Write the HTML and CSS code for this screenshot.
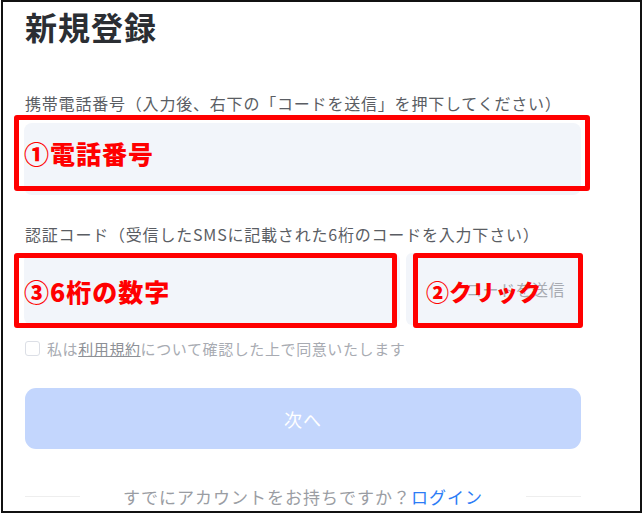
FILE: index.html
```html
<!DOCTYPE html>
<html lang="ja">
<head>
<meta charset="utf-8">
<link rel="stylesheet" href="styles.css">
</head>
<body>
<div class="frame">
  <div class="form">
    <h1 class="title">新規登録</h1>
    <div class="label label-first">携帯電話番号（入力後、右下の「コードを送信」を押下してください）</div>
    <div class="field">
      <div class="input input-full"></div>
      <div class="mark mark-phone"><span class="mark-text">①電話番号</span></div>
    </div>
    <div class="label label-second">認証コード（受信したSMSに記載された6桁のコードを入力下さい）</div>
    <div class="code-row">
      <div class="field field-code">
        <div class="input input-code"></div>
        <div class="mark mark-code"><span class="mark-text">③6桁の数字</span></div>
      </div>
      <div class="field field-send">
        <div class="send-btn">コードを送信</div>
        <div class="mark mark-send"><span class="mark-text mark-text-small">②クリック</span></div>
      </div>
    </div>
    <div class="agree">
      <span class="checkbox"></span>
      <span class="agree-text">私は<span class="terms">利用規約</span>について確認した上で同意いたします</span>
    </div>
    <div class="next-btn">次へ</div>
    <div class="footer">
      <span class="rule"></span>
      <span class="footer-text">すでにアカウントをお持ちですか？<span class="login">ログイン</span></span>
      <span class="rule"></span>
    </div>
  </div>
</div>
</body>
</html>
```
FILE: styles.css
```css
* { box-sizing: border-box; }
html, body {
  margin: 0;
  padding: 0;
  background: #ffffff;
}
body {
  font-family: "Noto Sans CJK JP", "Noto Sans", sans-serif;
  width: 644px;
  height: 513px;
  overflow: hidden;
}
.frame {
  margin-left: 1px;
  width: 641px;
  height: 513px;
  border: 2px solid #111111;
  background: #ffffff;
  padding-left: 22px;
}
.form {
  width: 556px;
  display: flex;
  flex-direction: column;
}
.title {
  margin: 4px 0 0 0;
  font-size: 32px;
  line-height: 40px;
  font-weight: 700;
  color: #2b2e33;
  letter-spacing: 1px;
}
.label {
  font-size: 16px;
  line-height: 22px;
  color: #5a5d63;
  letter-spacing: 0.8px;
  white-space: nowrap;
}
.label-first { margin-top: 46px; }
.label-second { margin-top: 28px; }
.field { position: relative; }
.input {
  background: #f2f5fa;
  border-radius: 8px;
  height: 72px;
}
.input-full { margin-top: 9px; margin-left: -1px; width: 557px; }
.code-row {
  margin-top: 8px;
  display: flex;
  gap: 5px;
  width: 556px;
}
.field-code { width: 376px; }
.input-code { width: 376px; margin-left: -1px; }
.field-send { width: 175px; }
.send-btn {
  height: 72px;
  background: #f2f5fa;
  border-radius: 6px;
  display: flex;
  align-items: center;
  justify-content: center;
  padding-left: 44px;
  font-size: 16px;
  color: #a8abb2;
  letter-spacing: 0.5px;
}
.mark {
  position: absolute;
  border: 5px solid #ff0000;
  border-radius: 3px;
  display: flex;
  align-items: center;
}
.mark-phone {
  left: -11px;
  top: 1px;
  width: 576px;
  height: 76px;
  padding-left: 5px;
}
.mark-code {
  left: -11px;
  top: 0;
  width: 383px;
  height: 75px;
  padding-left: 5px;
}
.mark-send {
  left: 7px;
  top: 0;
  width: 170px;
  height: 75px;
  padding-left: 8px;
}
.mark-text {
  color: #ff0000;
  font-size: 25px;
  font-weight: 900;
  letter-spacing: 1px;
  white-space: nowrap;
  line-height: 30px;
}
.mark-text-small { font-size: 23px; letter-spacing: 0; }
.agree {
  margin-top: 13px;
  display: flex;
  align-items: center;
  gap: 7px;
  height: 20px;
}
.checkbox {
  width: 15px;
  height: 15px;
  border: 1px solid #dcdfe6;
  border-radius: 3px;
  background: #ffffff;
  flex: none;
}
.agree-text {
  font-size: 15px;
  color: #a8abb2;
  letter-spacing: 0.6px;
  white-space: nowrap;
}
.terms {
  color: #8d9096;
  text-decoration: underline;
}
.next-btn {
  margin-top: 30px;
  height: 61px;
  border-radius: 11px;
  background: #c3d6fd;
  color: #ffffff;
  font-size: 18px;
  display: flex;
  align-items: center;
  justify-content: center;
  letter-spacing: 1px;
}
.footer {
  margin-top: 35px;
  display: flex;
  align-items: center;
  justify-content: space-between;
  height: 24px;
}
.rule {
  width: 55px;
  height: 1px;
  background: #eeeeee;
}
.footer-text {
  font-size: 17px;
  color: #9a9da3;
  letter-spacing: 1px;
  white-space: nowrap;
}
.login { color: #2c7cf6; }
```
